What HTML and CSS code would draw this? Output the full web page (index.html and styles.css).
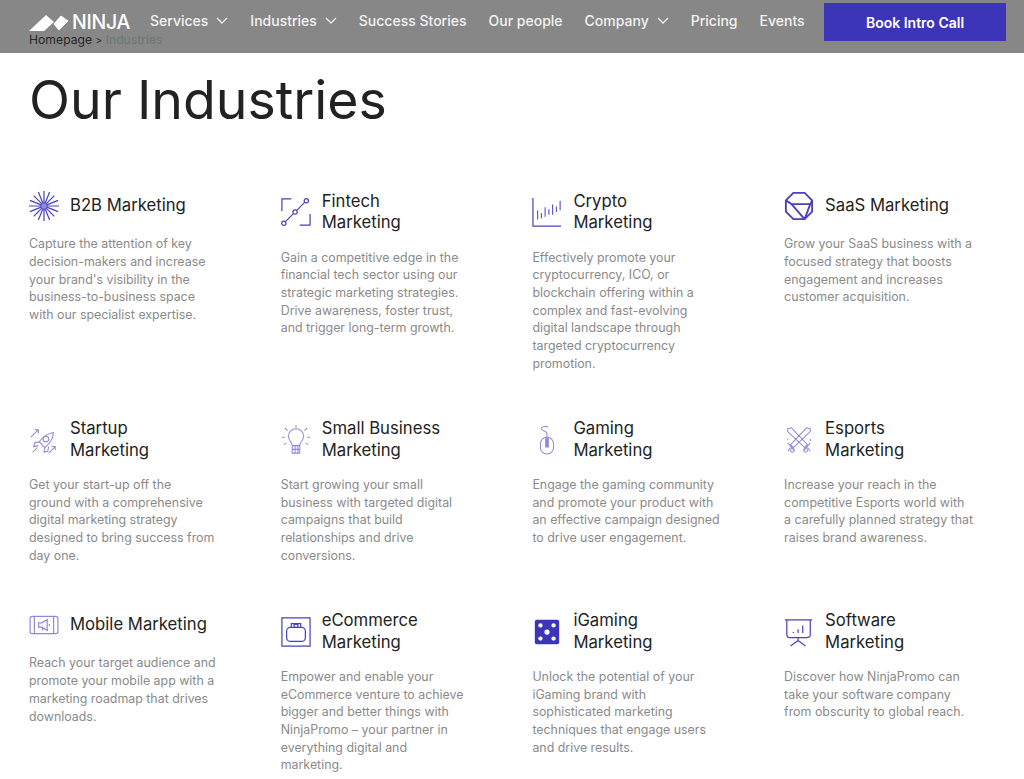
FILE: index.html
```html
<!DOCTYPE html>
<html lang="en">

<head>
    <meta charset="UTF-8">
    <meta name="viewport" content="width=device-width, initial-scale=1.0">
    <title>Our Industries</title>
    <link rel="stylesheet" href="styles.css">
</head>

<body>
    <header class="topbar">
        <a href="#" class="logo">
            <svg width="40" height="18" viewBox="0 0 40 18"><path d="M0 18L17 2l8 7-10 9z" fill="#fff"/><path d="M25 11l7-8 7 5-9 9z" fill="#fff" stroke="#fff" stroke-width="1" stroke-linejoin="round"/></svg>
            <span>NINJA</span>
        </a>
        <nav class="menu">
            <a href="#" class="menu-link">Services<svg class="chev" viewBox="0 0 12 7"><path d="M1 1l5 5 5-5"/></svg></a>
            <a href="#" class="menu-link">Industries<svg class="chev" viewBox="0 0 12 7"><path d="M1 1l5 5 5-5"/></svg></a>
            <a href="#" class="menu-link">Success Stories</a>
            <a href="#" class="menu-link">Our people</a>
            <a href="#" class="menu-link">Company<svg class="chev" viewBox="0 0 12 7"><path d="M1 1l5 5 5-5"/></svg></a>
            <a href="#" class="menu-link">Pricing</a>
            <a href="#" class="menu-link">Events</a>
        </nav>
        <a href="#" class="book-btn">Book Intro Call</a>
    </header>

    <main class="page">
        <div class="crumbs"><a href="#">Homepage</a> <span class="sep">&gt;</span> <span class="current">Industries</span></div>
        <h1>Our Industries</h1>

        <section class="grid">
            <article class="card">
                <div class="card-head">
                    <svg class="ico" viewBox="0 0 32 32"><path d="M0 16h32M16 0v32M5 5l22 22M27 5L5 27M10 1l12 30M22 1L10 31M1 10l30 12M31 10L1 22"/><circle cx="16" cy="16" r="3" class="fill"/></svg>
                    <h2>B2B Marketing</h2>
                </div>
                <p>Capture the attention of key<br>decision-makers and increase<br>your brand's visibility in the<br>business-to-business space<br>with our specialist expertise.</p>
            </article>
            <article class="card">
                <div class="card-head">
                    <svg class="ico" viewBox="0 0 32 32"><path d="M1 15V2h10M31 18v12H20M5 26l8-8M17 14l8-8"/><circle cx="3" cy="28" r="2.300"/><circle cx="15" cy="16" r="2.300"/><circle cx="27" cy="4" r="2.300"/></svg>
                    <h2>Fintech<br>Marketing</h2>
                </div>
                <p>Gain a competitive edge in the<br>financial tech sector using our<br>strategic marketing strategies.<br>Drive awareness, foster trust,<br>and trigger long-term growth.</p>
            </article>
            <article class="card">
                <div class="card-head">
                    <svg class="ico" viewBox="0 0 32 32"><path d="M1 1v30h30"/><path class="thin" d="M6 14v10M10 17v6M14 11v10M18 13v6M22 8v11M26 10v6M30 4v10"/></svg>
                    <h2>Crypto<br>Marketing</h2>
                </div>
                <p>Effectively promote your<br>cryptocurrency, ICO, or<br>blockchain offering within a<br>complex and fast-evolving<br>digital landscape through<br>targeted cryptocurrency<br>promotion.</p>
            </article>
            <article class="card">
                <div class="card-head">
                    <svg class="ico ico-bold" viewBox="0 0 32 32"><path d="M10 2h12l8 8v12l-8 8H10l-8-8V10zM2 10l6 4h20l2-4M8 14l14 16M28 14l-6 16"/></svg>
                    <h2>SaaS Marketing</h2>
                </div>
                <p>Grow your SaaS business with a<br>focused strategy that boosts<br>engagement and increases<br>customer acquisition.</p>
            </article>

            <article class="card">
                <div class="card-head">
                    <svg class="ico ico-light" viewBox="0 0 32 32"><path d="M26 8c0 6-3 11-9 16l-6-6c4-6 9-9 15-10zM11 18l-5 1-1 4 5-1M17 24l-1 5 4-1 1-5M9 24l-5 5M2 13l8-8M6 5h4v4M21 30l7-7M24 23h4v4"/><circle cx="18" cy="15" r="3"/></svg>
                    <h2>Startup<br>Marketing</h2>
                </div>
                <p>Get your start-up off the<br>ground with a comprehensive<br>digital marketing strategy<br>designed to bring success from<br>day one.</p>
            </article>
            <article class="card">
                <div class="card-head">
                    <svg class="ico ico-light" viewBox="0 0 32 32"><path d="M12 22c0-4-4-5-4-10a8 8 0 0 1 16 0c0 5-4 6-4 10zM12 22h8v8h-8zM12 26h8M15 22v8M18 22v8M16 0v3M4 3l3 3M28 3l-3 3M1 13h3M28 13h3M3 21l3-2M29 21l-3-2"/></svg>
                    <h2>Small Business<br>Marketing</h2>
                </div>
                <p>Start growing your small<br>business with targeted digital<br>campaigns that build<br>relationships and drive<br>conversions.</p>
            </article>
            <article class="card">
                <div class="card-head">
                    <svg class="ico ico-light" viewBox="0 0 32 32"><path d="M16 13V9c0-3-6-2-6-5 0-2 3-3 7-2"/><rect x="9" y="13" width="14" height="18" rx="7"/><path d="M14 14h4v10h-4z" class="fill"/></svg>
                    <h2>Gaming<br>Marketing</h2>
                </div>
                <p>Engage the gaming community<br>and promote your product with<br>an effective campaign designed<br>to drive user engagement.</p>
            </article>
            <article class="card">
                <div class="card-head">
                    <svg class="ico ico-light" viewBox="0 0 32 32"><path d="M4 4l4-1 17 18-3 3L4 7zM28 4l-4-1L7 21l3 3L28 7zM4 19l7 8M28 19l-7 8M7 24l-3 4M25 24l3 4M28 15v2M4 15v1"/><circle cx="9" cy="27" r="2"/><circle cx="23" cy="27" r="2"/></svg>
                    <h2>Esports<br>Marketing</h2>
                </div>
                <p>Increase your reach in the<br>competitive Esports world with<br>a carefully planned strategy that<br>raises brand awareness.</p>
            </article>

            <article class="card">
                <div class="card-head">
                    <svg class="ico ico-light ico-wide" viewBox="0 0 28 18"><rect x="1" y="1" width="26" height="16" rx="2"/><path d="M5 1v16M23 1v16M9 7h3l5-3v10l-5-3H9zM19 8v2M12 11l1 3"/></svg>
                    <h2>Mobile Marketing</h2>
                </div>
                <p>Reach your target audience and<br>promote your mobile app with a<br>marketing roadmap that drives<br>downloads.</p>
            </article>
            <article class="card">
                <div class="card-head">
                    <svg class="ico" viewBox="0 0 32 32"><path d="M1 1h30v30H1z"/><rect x="6" y="11" width="20" height="15" rx="4"/><path d="M11 11V7h10v4M14 8h4v3h-4z"/></svg>
                    <h2>eCommerce<br>Marketing</h2>
                </div>
                <p>Empower and enable your<br>eCommerce venture to achieve<br>bigger and better things with<br>NinjaPromo &ndash; your partner in<br>everything digital and<br>marketing.</p>
            </article>
            <article class="card">
                <div class="card-head">
                    <svg class="ico" viewBox="0 0 32 32"><rect x="3" y="3" width="26" height="26" rx="2" class="solid"/><g class="dots"><circle cx="9" cy="9" r="2.300"/><circle cx="23" cy="9" r="2.300"/><circle cx="9" cy="23" r="2.300"/><circle cx="23" cy="23" r="2.300"/><circle cx="16" cy="16" r="2.800"/></g></svg>
                    <h2>iGaming<br>Marketing</h2>
                </div>
                <p>Unlock the potential of your<br>iGaming brand with<br>sophisticated marketing<br>techniques that engage users<br>and drive results.</p>
            </article>
            <article class="card">
                <div class="card-head">
                    <svg class="ico" viewBox="0 0 32 32"><path d="M1 3h29M3 3v16c0 2 1 3 3 3h18c2 0 4-1 4-3V3M15 22v3M7 31l8-6 8 6M10 16v1M15 13v4M20 9v8"/></svg>
                    <h2>Software<br>Marketing</h2>
                </div>
                <p>Discover how NinjaPromo can<br>take your software company<br>from obscurity to global reach.</p>
            </article>
        </section>
    </main>
</body>

</html>
```

FILE: styles.css
```css
* {
    margin: 0;
    padding: 0;
    box-sizing: border-box;
}

body {
    font-family: "Inter", "Liberation Sans", sans-serif;
    background: #fff;
    color: #222;
}

a {
    color: inherit;
    text-decoration: none;
}

/* sits over the breadcrumbs, that is why they look dimmed */
.topbar {
    position: absolute;
    left: 0;
    top: 0;
    width: 100%;
    height: 53px;
    padding: 3px 18px 0 29px;
    display: flex;
    align-items: flex-start;
    background: rgba(0, 0, 0, .47);
    color: #f2f2f2;
}

.logo {
    display: flex;
    align-items: center;
    gap: 3px;
    height: 38px;
    width: 121px;
    color: #fff;
    font-size: 19.500px;
    font-weight: 500;
    letter-spacing: -.3px;
}

.menu {
    display: flex;
    align-items: center;
    gap: 22px;
    height: 34px;
}

.menu-link {
    display: flex;
    align-items: center;
    font-size: 14px;
    font-weight: 500;
}

.chev {
    width: 12px;
    height: 7px;
    margin-left: 8px;
    fill: none;
    stroke: #f2f2f2;
    stroke-width: 1.300;
}

.book-btn {
    margin-left: auto;
    width: 182px;
    height: 38px;
    display: flex;
    align-items: center;
    justify-content: center;
    background: #3d35b8;
    color: #fff;
    font-size: 14px;
    font-weight: 600;
}

.page {
    padding: 32px 0 0 29px;
}

.crumbs {
    font-size: 12.200px;
    line-height: 16px;
    color: #4a4a4a;
}

.crumbs .sep {
    font-size: 10px;
}

.crumbs .current {
    color: #c6e2de;
}

h1 {
    font-size: 53.600px;
    font-weight: 400;
    line-height: 60px;
    margin-top: 22px;
    color: #222;
}

.grid {
    display: grid;
    grid-template-columns: repeat(4, 251.700px);
    row-gap: 45.500px;
    margin-top: 60.700px;
}

.card-head {
    display: flex;
    align-items: center;
    gap: 11px;
    min-height: 30px;
    margin-bottom: 14.500px;
}

h2 {
    font-size: 16.700px;
    font-weight: 400;
    line-height: 21.700px;
    color: #222;
    white-space: nowrap;
}

.card p {
    font-size: 12.400px;
    line-height: 17.700px;
    color: #8a8a8a;
    white-space: nowrap;
}

.ico {
    flex: none;
    width: 30px;
    height: 30px;
    fill: none;
    stroke: #4a42bd;
    stroke-width: 1.300;
}

.ico-bold {
    stroke-width: 2;
}

.ico-light {
    stroke: #8f89d6;
    stroke-width: 1.100;
}

.ico-wide {
    height: 20px;
}

.ico .thin {
    stroke-width: 1.200;
    stroke: #5a52c4;
}

.ico .fill {
    fill: #8f89d6;
    stroke: none;
}

.ico .solid {
    fill: #3d35b8;
    stroke: none;
}

.ico .dots {
    fill: #fff;
    stroke: none;
}
```
